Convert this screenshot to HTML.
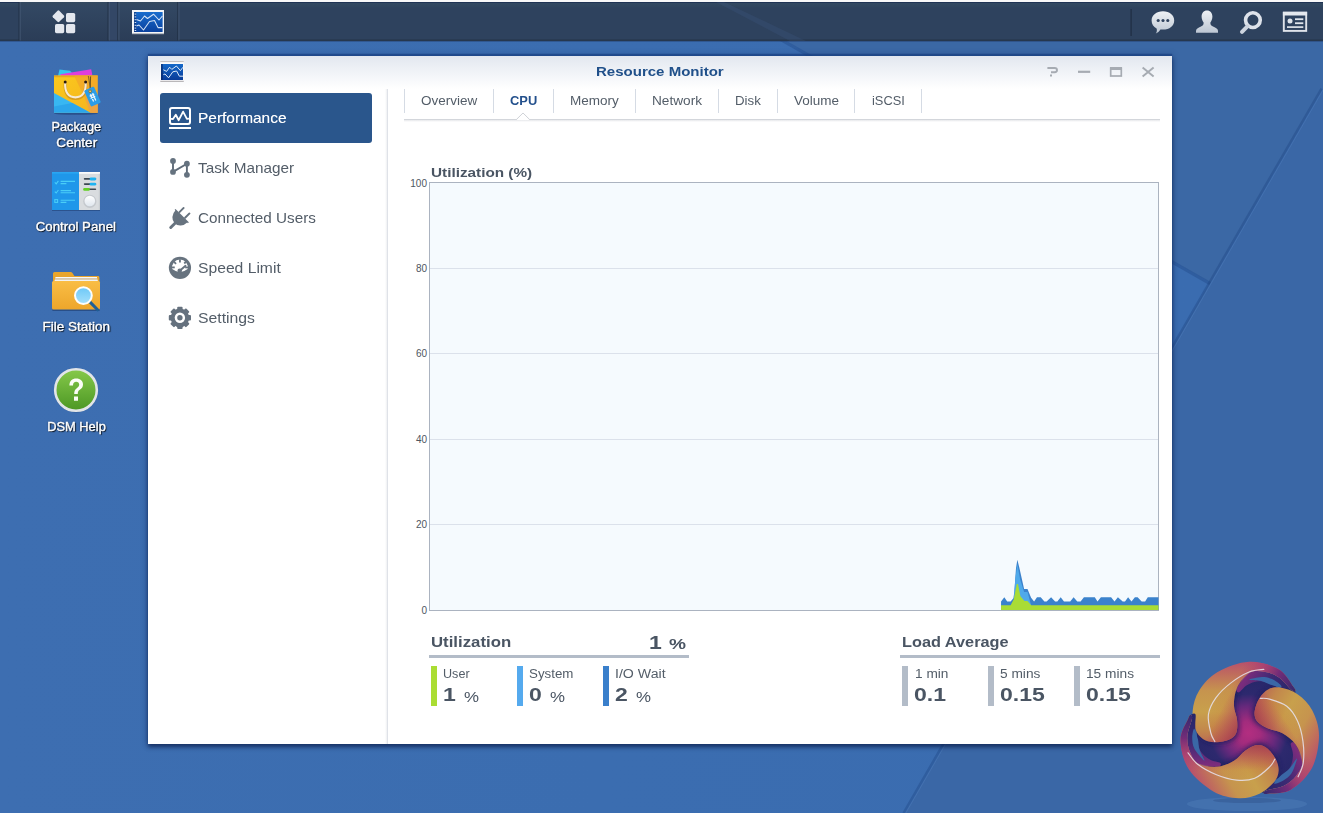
<!DOCTYPE html>
<html><head><meta charset="utf-8"><title>Resource Monitor</title><style>
html,body{margin:0;padding:0;}
body{width:1323px;height:813px;overflow:hidden;position:relative;background:#3b6cb0;font-family:"Liberation Sans",sans-serif;}
.t{position:absolute;white-space:nowrap;line-height:20px;height:20px;display:block;}
.abs{position:absolute;}
svg{position:absolute;overflow:visible;}
.dl{text-shadow:1px 1px 1px rgba(0,0,0,.85),0 0 2px rgba(0,0,0,.45);-webkit-text-stroke:.35px #fff;}
</style></head><body>
<svg style="left:0;top:0" width="1323" height="813" viewBox="0 0 1323 813">
<defs>
<linearGradient id="wg2" gradientUnits="userSpaceOnUse" x1="0" y1="0" x2="1200" y2="0"><stop offset="0" stop-color="#3d6eb1"/><stop offset="0.5" stop-color="#3b6db0"/><stop offset="1" stop-color="#3a6cb0"/></linearGradient>
</defs>
<rect width="1323" height="813" fill="#3b6cb0"/>
<polygon points="0,0 714,0 1210,282 905,813 0,813" fill="url(#wg2)"/>
<polygon points="714,0 1323,0 1323,88.7 1210,282" fill="#3b68a5"/>
<polygon points="1323,88.7 1323,813 905,813 1210,282" fill="#3a67a6"/>
<path d="M714 1.5 L1210 283.5" stroke="rgba(24,58,120,.30)" stroke-width="3.2" fill="none"/>
<path d="M1323 88.7 L1210 284 L905 813" stroke="rgba(24,58,120,.30)" stroke-width="2.4" fill="none" transform="translate(-1.5,0)"/>
<path d="M1323 88.7 L1210 284 L905 813" stroke="rgba(120,170,230,.16)" stroke-width="1" fill="none" transform="translate(0.8,0)"/>
<ellipse cx="1247" cy="804" rx="60" ry="7" fill="rgba(130,175,230,.14)"/><ellipse cx="1247" cy="800.5" rx="34" ry="2.6" fill="rgba(20,40,90,.18)"/>
</svg>

<svg style="left:1179.7px;top:662.5px" width="140" height="140" viewBox="-101 -101 202 202">
<defs>
<radialGradient id="lgc" gradientUnits="userSpaceOnUse" cx="-2" cy="0" r="78">
<stop offset="0" stop-color="#b32e80"/><stop offset="0.22" stop-color="#a22c7d"/><stop offset="0.5" stop-color="#66297c"/><stop offset="0.72" stop-color="#2d296e"/><stop offset="1" stop-color="#28276a"/>
</radialGradient>
<linearGradient id="lgl" gradientUnits="userSpaceOnUse" x1="0" y1="-103" x2="0" y2="14">
<stop offset="0" stop-color="#b8506c"/><stop offset="0.14" stop-color="#bf6a5e"/><stop offset="0.36" stop-color="#c6944e"/><stop offset="0.62" stop-color="#c8a04c"/><stop offset="0.85" stop-color="#c2874c"/><stop offset="1" stop-color="#bb6c52"/>
</linearGradient>
<linearGradient id="lgt" gradientUnits="userSpaceOnUse" x1="-8" y1="-100" x2="66" y2="-62">
<stop offset="0" stop-color="#b04070" stop-opacity="0"/><stop offset="0.3" stop-color="#a83a74" stop-opacity=".7"/><stop offset="0.6" stop-color="#742c78" stop-opacity="1"/><stop offset="1" stop-color="#34296e" stop-opacity="1"/>
</linearGradient>
<linearGradient id="lgi" gradientUnits="userSpaceOnUse" x1="-62" y1="-45" x2="-16" y2="-8">
<stop offset="0" stop-color="#d09c48" stop-opacity="0"/><stop offset="0.55" stop-color="#c8783e" stop-opacity=".35"/><stop offset="1" stop-color="#b04a40" stop-opacity=".65"/>
</linearGradient>
<linearGradient id="lgr" gradientUnits="userSpaceOnUse" x1="0" y1="-90" x2="60" y2="-55">
<stop offset="0" stop-color="#7a2c7c"/><stop offset="0.45" stop-color="#3e2a74"/><stop offset="1" stop-color="#25266a"/>
</linearGradient>
</defs>
<circle cx="0" cy="0" r="77" fill="url(#lgc)"/>
<defs><filter id="lbl" x="-20%" y="-20%" width="140%" height="140%"><feGaussianBlur stdDeviation="3"/></filter><clipPath id="lcp"><circle cx="0" cy="0" r="77"/></clipPath></defs>
<g clip-path="url(#lcp)">
<g transform="rotate(0)"><path d="M-50.7 13.3 C-56.9 13.1 -63.3 11.6 -68.0 8.5 C-72.7 5.4 -76.2 1.4 -78.7 -5.3 C-81.1 -12.1 -83.6 -22.7 -82.7 -32.0 C-81.8 -41.3 -79.3 -52.0 -73.3 -61.3 C-67.3 -70.7 -58.7 -81.1 -46.7 -88.0 C-34.7 -94.9 -16.0 -102.0 -1.3 -102.7 C13.3 -103.3 30.7 -98.0 41.3 -92.0 C52.0 -86.0 58.7 -71.9 62.7 -66.7 C66.7 -61.5 65.9 -61.5 65.3 -60.8 C64.8 -60.1 63.5 -59.1 59.5 -62.4 C55.5 -65.7 47.9 -76.2 41.3 -80.5 C34.8 -84.9 27.1 -87.6 20.0 -88.5 C12.9 -89.5 5.1 -90.3 -1.3 -86.4 C-7.8 -82.5 -15.0 -73.1 -18.7 -65.3 C-22.3 -57.6 -23.2 -47.8 -23.2 -40.0 C-23.2 -32.2 -19.2 -25.3 -18.7 -18.7 C-18.1 -12.0 -18.0 -4.8 -20.0 0.0 C-22.0 4.8 -25.6 7.6 -30.7 9.9 C-35.8 12.1 -44.4 13.6 -50.7 13.3Z" fill="#1f1f5c" opacity=".7" filter="url(#lbl)" transform="translate(3,3)"/></g>
<g transform="rotate(120)"><path d="M-50.7 13.3 C-56.9 13.1 -63.3 11.6 -68.0 8.5 C-72.7 5.4 -76.2 1.4 -78.7 -5.3 C-81.1 -12.1 -83.6 -22.7 -82.7 -32.0 C-81.8 -41.3 -79.3 -52.0 -73.3 -61.3 C-67.3 -70.7 -58.7 -81.1 -46.7 -88.0 C-34.7 -94.9 -16.0 -102.0 -1.3 -102.7 C13.3 -103.3 30.7 -98.0 41.3 -92.0 C52.0 -86.0 58.7 -71.9 62.7 -66.7 C66.7 -61.5 65.9 -61.5 65.3 -60.8 C64.8 -60.1 63.5 -59.1 59.5 -62.4 C55.5 -65.7 47.9 -76.2 41.3 -80.5 C34.8 -84.9 27.1 -87.6 20.0 -88.5 C12.9 -89.5 5.1 -90.3 -1.3 -86.4 C-7.8 -82.5 -15.0 -73.1 -18.7 -65.3 C-22.3 -57.6 -23.2 -47.8 -23.2 -40.0 C-23.2 -32.2 -19.2 -25.3 -18.7 -18.7 C-18.1 -12.0 -18.0 -4.8 -20.0 0.0 C-22.0 4.8 -25.6 7.6 -30.7 9.9 C-35.8 12.1 -44.4 13.6 -50.7 13.3Z" fill="#1f1f5c" opacity=".7" filter="url(#lbl)" transform="translate(3,3)"/></g>
<g transform="rotate(240)"><path d="M-50.7 13.3 C-56.9 13.1 -63.3 11.6 -68.0 8.5 C-72.7 5.4 -76.2 1.4 -78.7 -5.3 C-81.1 -12.1 -83.6 -22.7 -82.7 -32.0 C-81.8 -41.3 -79.3 -52.0 -73.3 -61.3 C-67.3 -70.7 -58.7 -81.1 -46.7 -88.0 C-34.7 -94.9 -16.0 -102.0 -1.3 -102.7 C13.3 -103.3 30.7 -98.0 41.3 -92.0 C52.0 -86.0 58.7 -71.9 62.7 -66.7 C66.7 -61.5 65.9 -61.5 65.3 -60.8 C64.8 -60.1 63.5 -59.1 59.5 -62.4 C55.5 -65.7 47.9 -76.2 41.3 -80.5 C34.8 -84.9 27.1 -87.6 20.0 -88.5 C12.9 -89.5 5.1 -90.3 -1.3 -86.4 C-7.8 -82.5 -15.0 -73.1 -18.7 -65.3 C-22.3 -57.6 -23.2 -47.8 -23.2 -40.0 C-23.2 -32.2 -19.2 -25.3 -18.7 -18.7 C-18.1 -12.0 -18.0 -4.8 -20.0 0.0 C-22.0 4.8 -25.6 7.6 -30.7 9.9 C-35.8 12.1 -44.4 13.6 -50.7 13.3Z" fill="#1f1f5c" opacity=".7" filter="url(#lbl)" transform="translate(3,3)"/></g>
</g>
<g transform="rotate(0)"><path d="M-1.3 -86.4 C5.1 -90.3 12.9 -89.5 20.0 -88.5 C27.1 -87.6 34.8 -84.9 41.3 -80.5 C47.9 -76.2 55.5 -65.7 59.5 -62.4 C63.5 -59.1 64.8 -62.1 65.3 -60.8 C65.9 -59.5 65.3 -54.4 62.7 -54.7 C60.0 -55.0 54.7 -59.8 49.3 -62.7 C44.0 -65.6 36.9 -70.0 30.7 -72.0 C24.4 -74.0 17.8 -75.1 12.0 -74.7 C6.2 -74.2 0.7 -72.0 -4.0 -69.3 C-8.7 -66.7 -13.6 -59.3 -16.0 -58.7 C-18.4 -58.0 -21.1 -60.7 -18.7 -65.3 C-16.2 -70.0 -7.8 -82.5 -1.3 -86.4Z" fill="url(#lgr)"/>
<path d="M-50.7 13.3 C-56.9 13.1 -63.3 11.6 -68.0 8.5 C-72.7 5.4 -76.2 1.4 -78.7 -5.3 C-81.1 -12.1 -83.6 -22.7 -82.7 -32.0 C-81.8 -41.3 -79.3 -52.0 -73.3 -61.3 C-67.3 -70.7 -58.7 -81.1 -46.7 -88.0 C-34.7 -94.9 -16.0 -102.0 -1.3 -102.7 C13.3 -103.3 30.7 -98.0 41.3 -92.0 C52.0 -86.0 58.7 -71.9 62.7 -66.7 C66.7 -61.5 65.9 -61.5 65.3 -60.8 C64.8 -60.1 63.5 -59.1 59.5 -62.4 C55.5 -65.7 47.9 -76.2 41.3 -80.5 C34.8 -84.9 27.1 -87.6 20.0 -88.5 C12.9 -89.5 5.1 -90.3 -1.3 -86.4 C-7.8 -82.5 -15.0 -73.1 -18.7 -65.3 C-22.3 -57.6 -23.2 -47.8 -23.2 -40.0 C-23.2 -32.2 -19.2 -25.3 -18.7 -18.7 C-18.1 -12.0 -18.0 -4.8 -20.0 0.0 C-22.0 4.8 -25.6 7.6 -30.7 9.9 C-35.8 12.1 -44.4 13.6 -50.7 13.3Z" fill="url(#lgl)"/>
<path d="M-50.7 13.3 C-56.9 13.1 -63.3 11.6 -68.0 8.5 C-72.7 5.4 -76.2 1.4 -78.7 -5.3 C-81.1 -12.1 -83.6 -22.7 -82.7 -32.0 C-81.8 -41.3 -79.3 -52.0 -73.3 -61.3 C-67.3 -70.7 -58.7 -81.1 -46.7 -88.0 C-34.7 -94.9 -16.0 -102.0 -1.3 -102.7 C13.3 -103.3 30.7 -98.0 41.3 -92.0 C52.0 -86.0 58.7 -71.9 62.7 -66.7 C66.7 -61.5 65.9 -61.5 65.3 -60.8 C64.8 -60.1 63.5 -59.1 59.5 -62.4 C55.5 -65.7 47.9 -76.2 41.3 -80.5 C34.8 -84.9 27.1 -87.6 20.0 -88.5 C12.9 -89.5 5.1 -90.3 -1.3 -86.4 C-7.8 -82.5 -15.0 -73.1 -18.7 -65.3 C-22.3 -57.6 -23.2 -47.8 -23.2 -40.0 C-23.2 -32.2 -19.2 -25.3 -18.7 -18.7 C-18.1 -12.0 -18.0 -4.8 -20.0 0.0 C-22.0 4.8 -25.6 7.6 -30.7 9.9 C-35.8 12.1 -44.4 13.6 -50.7 13.3Z" fill="url(#lgt)"/>
<path d="M-1.3 -87.2 C-2.9 -88.3 -20.0 -78.1 -28.0 -72.0 C-36.0 -65.9 -44.0 -58.2 -49.3 -50.7 C-54.7 -43.1 -58.8 -35.1 -60.0 -26.7 C-61.2 -18.2 -58.1 -6.6 -56.5 0.0 C-55.0 6.6 -55.0 11.2 -50.7 12.8 C-46.4 14.4 -35.8 12.0 -30.7 9.9 C-25.6 7.7 -22.0 4.8 -20.0 0.0 C-18.0 -4.8 -18.1 -12.0 -18.7 -18.7 C-19.2 -25.3 -23.2 -32.2 -23.2 -40.0 C-23.2 -47.8 -22.3 -57.5 -18.7 -65.3 C-15.0 -73.2 0.2 -86.1 -1.3 -87.2Z" fill="url(#lgi)"/>
<path d="M20.0 -91.7 C16.4 -91.1 6.7 -91.3 -1.3 -88.0 C-9.3 -84.7 -20.0 -78.2 -28.0 -72.0 C-36.0 -65.8 -44.0 -58.2 -49.3 -50.7 C-54.7 -43.1 -58.8 -35.1 -60.0 -26.7 C-61.2 -18.2 -58.1 -6.5 -56.5 0.0 C-55.0 6.5 -51.6 10.2 -50.7 12.3" fill="none" stroke="#e6e0ea" stroke-width="1.7" stroke-linecap="round" opacity=".88"/></g>
<g transform="rotate(120)"><path d="M-1.3 -86.4 C5.1 -90.3 12.9 -89.5 20.0 -88.5 C27.1 -87.6 34.8 -84.9 41.3 -80.5 C47.9 -76.2 55.5 -65.7 59.5 -62.4 C63.5 -59.1 64.8 -62.1 65.3 -60.8 C65.9 -59.5 65.3 -54.4 62.7 -54.7 C60.0 -55.0 54.7 -59.8 49.3 -62.7 C44.0 -65.6 36.9 -70.0 30.7 -72.0 C24.4 -74.0 17.8 -75.1 12.0 -74.7 C6.2 -74.2 0.7 -72.0 -4.0 -69.3 C-8.7 -66.7 -13.6 -59.3 -16.0 -58.7 C-18.4 -58.0 -21.1 -60.7 -18.7 -65.3 C-16.2 -70.0 -7.8 -82.5 -1.3 -86.4Z" fill="url(#lgr)"/>
<path d="M-50.7 13.3 C-56.9 13.1 -63.3 11.6 -68.0 8.5 C-72.7 5.4 -76.2 1.4 -78.7 -5.3 C-81.1 -12.1 -83.6 -22.7 -82.7 -32.0 C-81.8 -41.3 -79.3 -52.0 -73.3 -61.3 C-67.3 -70.7 -58.7 -81.1 -46.7 -88.0 C-34.7 -94.9 -16.0 -102.0 -1.3 -102.7 C13.3 -103.3 30.7 -98.0 41.3 -92.0 C52.0 -86.0 58.7 -71.9 62.7 -66.7 C66.7 -61.5 65.9 -61.5 65.3 -60.8 C64.8 -60.1 63.5 -59.1 59.5 -62.4 C55.5 -65.7 47.9 -76.2 41.3 -80.5 C34.8 -84.9 27.1 -87.6 20.0 -88.5 C12.9 -89.5 5.1 -90.3 -1.3 -86.4 C-7.8 -82.5 -15.0 -73.1 -18.7 -65.3 C-22.3 -57.6 -23.2 -47.8 -23.2 -40.0 C-23.2 -32.2 -19.2 -25.3 -18.7 -18.7 C-18.1 -12.0 -18.0 -4.8 -20.0 0.0 C-22.0 4.8 -25.6 7.6 -30.7 9.9 C-35.8 12.1 -44.4 13.6 -50.7 13.3Z" fill="url(#lgl)"/>
<path d="M-50.7 13.3 C-56.9 13.1 -63.3 11.6 -68.0 8.5 C-72.7 5.4 -76.2 1.4 -78.7 -5.3 C-81.1 -12.1 -83.6 -22.7 -82.7 -32.0 C-81.8 -41.3 -79.3 -52.0 -73.3 -61.3 C-67.3 -70.7 -58.7 -81.1 -46.7 -88.0 C-34.7 -94.9 -16.0 -102.0 -1.3 -102.7 C13.3 -103.3 30.7 -98.0 41.3 -92.0 C52.0 -86.0 58.7 -71.9 62.7 -66.7 C66.7 -61.5 65.9 -61.5 65.3 -60.8 C64.8 -60.1 63.5 -59.1 59.5 -62.4 C55.5 -65.7 47.9 -76.2 41.3 -80.5 C34.8 -84.9 27.1 -87.6 20.0 -88.5 C12.9 -89.5 5.1 -90.3 -1.3 -86.4 C-7.8 -82.5 -15.0 -73.1 -18.7 -65.3 C-22.3 -57.6 -23.2 -47.8 -23.2 -40.0 C-23.2 -32.2 -19.2 -25.3 -18.7 -18.7 C-18.1 -12.0 -18.0 -4.8 -20.0 0.0 C-22.0 4.8 -25.6 7.6 -30.7 9.9 C-35.8 12.1 -44.4 13.6 -50.7 13.3Z" fill="url(#lgt)"/>
<path d="M-1.3 -87.2 C-2.9 -88.3 -20.0 -78.1 -28.0 -72.0 C-36.0 -65.9 -44.0 -58.2 -49.3 -50.7 C-54.7 -43.1 -58.8 -35.1 -60.0 -26.7 C-61.2 -18.2 -58.1 -6.6 -56.5 0.0 C-55.0 6.6 -55.0 11.2 -50.7 12.8 C-46.4 14.4 -35.8 12.0 -30.7 9.9 C-25.6 7.7 -22.0 4.8 -20.0 0.0 C-18.0 -4.8 -18.1 -12.0 -18.7 -18.7 C-19.2 -25.3 -23.2 -32.2 -23.2 -40.0 C-23.2 -47.8 -22.3 -57.5 -18.7 -65.3 C-15.0 -73.2 0.2 -86.1 -1.3 -87.2Z" fill="url(#lgi)"/>
<path d="M20.0 -91.7 C16.4 -91.1 6.7 -91.3 -1.3 -88.0 C-9.3 -84.7 -20.0 -78.2 -28.0 -72.0 C-36.0 -65.8 -44.0 -58.2 -49.3 -50.7 C-54.7 -43.1 -58.8 -35.1 -60.0 -26.7 C-61.2 -18.2 -58.1 -6.5 -56.5 0.0 C-55.0 6.5 -51.6 10.2 -50.7 12.3" fill="none" stroke="#e6e0ea" stroke-width="1.7" stroke-linecap="round" opacity=".88"/></g>
<g transform="rotate(240)"><path d="M-1.3 -86.4 C5.1 -90.3 12.9 -89.5 20.0 -88.5 C27.1 -87.6 34.8 -84.9 41.3 -80.5 C47.9 -76.2 55.5 -65.7 59.5 -62.4 C63.5 -59.1 64.8 -62.1 65.3 -60.8 C65.9 -59.5 65.3 -54.4 62.7 -54.7 C60.0 -55.0 54.7 -59.8 49.3 -62.7 C44.0 -65.6 36.9 -70.0 30.7 -72.0 C24.4 -74.0 17.8 -75.1 12.0 -74.7 C6.2 -74.2 0.7 -72.0 -4.0 -69.3 C-8.7 -66.7 -13.6 -59.3 -16.0 -58.7 C-18.4 -58.0 -21.1 -60.7 -18.7 -65.3 C-16.2 -70.0 -7.8 -82.5 -1.3 -86.4Z" fill="url(#lgr)"/>
<path d="M-50.7 13.3 C-56.9 13.1 -63.3 11.6 -68.0 8.5 C-72.7 5.4 -76.2 1.4 -78.7 -5.3 C-81.1 -12.1 -83.6 -22.7 -82.7 -32.0 C-81.8 -41.3 -79.3 -52.0 -73.3 -61.3 C-67.3 -70.7 -58.7 -81.1 -46.7 -88.0 C-34.7 -94.9 -16.0 -102.0 -1.3 -102.7 C13.3 -103.3 30.7 -98.0 41.3 -92.0 C52.0 -86.0 58.7 -71.9 62.7 -66.7 C66.7 -61.5 65.9 -61.5 65.3 -60.8 C64.8 -60.1 63.5 -59.1 59.5 -62.4 C55.5 -65.7 47.9 -76.2 41.3 -80.5 C34.8 -84.9 27.1 -87.6 20.0 -88.5 C12.9 -89.5 5.1 -90.3 -1.3 -86.4 C-7.8 -82.5 -15.0 -73.1 -18.7 -65.3 C-22.3 -57.6 -23.2 -47.8 -23.2 -40.0 C-23.2 -32.2 -19.2 -25.3 -18.7 -18.7 C-18.1 -12.0 -18.0 -4.8 -20.0 0.0 C-22.0 4.8 -25.6 7.6 -30.7 9.9 C-35.8 12.1 -44.4 13.6 -50.7 13.3Z" fill="url(#lgl)"/>
<path d="M-50.7 13.3 C-56.9 13.1 -63.3 11.6 -68.0 8.5 C-72.7 5.4 -76.2 1.4 -78.7 -5.3 C-81.1 -12.1 -83.6 -22.7 -82.7 -32.0 C-81.8 -41.3 -79.3 -52.0 -73.3 -61.3 C-67.3 -70.7 -58.7 -81.1 -46.7 -88.0 C-34.7 -94.9 -16.0 -102.0 -1.3 -102.7 C13.3 -103.3 30.7 -98.0 41.3 -92.0 C52.0 -86.0 58.7 -71.9 62.7 -66.7 C66.7 -61.5 65.9 -61.5 65.3 -60.8 C64.8 -60.1 63.5 -59.1 59.5 -62.4 C55.5 -65.7 47.9 -76.2 41.3 -80.5 C34.8 -84.9 27.1 -87.6 20.0 -88.5 C12.9 -89.5 5.1 -90.3 -1.3 -86.4 C-7.8 -82.5 -15.0 -73.1 -18.7 -65.3 C-22.3 -57.6 -23.2 -47.8 -23.2 -40.0 C-23.2 -32.2 -19.2 -25.3 -18.7 -18.7 C-18.1 -12.0 -18.0 -4.8 -20.0 0.0 C-22.0 4.8 -25.6 7.6 -30.7 9.9 C-35.8 12.1 -44.4 13.6 -50.7 13.3Z" fill="url(#lgt)"/>
<path d="M-1.3 -87.2 C-2.9 -88.3 -20.0 -78.1 -28.0 -72.0 C-36.0 -65.9 -44.0 -58.2 -49.3 -50.7 C-54.7 -43.1 -58.8 -35.1 -60.0 -26.7 C-61.2 -18.2 -58.1 -6.6 -56.5 0.0 C-55.0 6.6 -55.0 11.2 -50.7 12.8 C-46.4 14.4 -35.8 12.0 -30.7 9.9 C-25.6 7.7 -22.0 4.8 -20.0 0.0 C-18.0 -4.8 -18.1 -12.0 -18.7 -18.7 C-19.2 -25.3 -23.2 -32.2 -23.2 -40.0 C-23.2 -47.8 -22.3 -57.5 -18.7 -65.3 C-15.0 -73.2 0.2 -86.1 -1.3 -87.2Z" fill="url(#lgi)"/>
<path d="M20.0 -91.7 C16.4 -91.1 6.7 -91.3 -1.3 -88.0 C-9.3 -84.7 -20.0 -78.2 -28.0 -72.0 C-36.0 -65.8 -44.0 -58.2 -49.3 -50.7 C-54.7 -43.1 -58.8 -35.1 -60.0 -26.7 C-61.2 -18.2 -58.1 -6.5 -56.5 0.0 C-55.0 6.5 -51.6 10.2 -50.7 12.3" fill="none" stroke="#e6e0ea" stroke-width="1.7" stroke-linecap="round" opacity=".88"/></g>
<path d="M0.3 -77.9 C3.7 -78.7 14.8 -81.3 20.7 -80.9 C26.6 -80.5 31.6 -78.0 35.8 -75.6 C39.9 -73.2 46.6 -67.6 45.6 -66.6 C44.6 -65.6 34.7 -68.2 29.8 -69.6 C24.9 -71.0 21.1 -73.8 16.2 -74.9 C11.3 -76.0 2.9 -75.9 0.3 -76.4 C-2.4 -76.9 -3.1 -77.2 0.3 -77.9Z" fill="#3a67a6" transform="rotate(0)"/>
<path d="M0.3 -77.9 C3.7 -78.7 14.8 -81.3 20.7 -80.9 C26.6 -80.5 31.6 -78.0 35.8 -75.6 C39.9 -73.2 46.6 -67.6 45.6 -66.6 C44.6 -65.6 34.7 -68.2 29.8 -69.6 C24.9 -71.0 21.1 -73.8 16.2 -74.9 C11.3 -76.0 2.9 -75.9 0.3 -76.4 C-2.4 -76.9 -3.1 -77.2 0.3 -77.9Z" fill="#3a67a6" transform="rotate(120)"/>
<path d="M0.3 -77.9 C3.7 -78.7 14.8 -81.3 20.7 -80.9 C26.6 -80.5 31.6 -78.0 35.8 -75.6 C39.9 -73.2 46.6 -67.6 45.6 -66.6 C44.6 -65.6 34.7 -68.2 29.8 -69.6 C24.9 -71.0 21.1 -73.8 16.2 -74.9 C11.3 -76.0 2.9 -75.9 0.3 -76.4 C-2.4 -76.9 -3.1 -77.2 0.3 -77.9Z" fill="#3a67a6" transform="rotate(240)"/>
</svg>
<div class="abs" style="left:0;top:0;width:1323px;height:2px;background:#f8f8f8;"></div>
<div class="abs" style="left:0;top:2px;width:1323px;height:38.5px;background:linear-gradient(#1f3354 0,#1f3354 0.7px,#324861 1.4px,#30465f 4px,#2e425e 6px,#2e425e 36.5px,#26374e 38px);"></div>
<svg style="left:0;top:2px" width="1323" height="39" viewBox="0 2 1323 39">
<defs>
<linearGradient id="tb1" x1="0" y1="0" x2="0" y2="1"><stop offset="0" stop-color="#34495f"/><stop offset="0.15" stop-color="#324762"/><stop offset="1" stop-color="#2b3d57"/></linearGradient>
<linearGradient id="ic" x1="0" y1="0" x2="0" y2="1"><stop offset="0" stop-color="#eef1f5"/><stop offset="1" stop-color="#bcc6d3"/></linearGradient>
</defs>
<path d="M716 2 L790 41 L806 41 L724 2Z" fill="rgba(70,100,150,.18)"/>
<rect x="20" y="2" width="88" height="38.5" fill="url(#tb1)"/>
<rect x="109" y="2" width="9" height="38.5" fill="#36496a" opacity=".75"/>
<rect x="119" y="2" width="59" height="38.5" fill="url(#tb1)"/>
<g fill="#1f2d42"><rect x="18.6" y="2" width="1" height="38.5"/><rect x="107.6" y="2" width="1" height="38.5"/><rect x="117.4" y="2" width="1" height="38.5"/><rect x="177.4" y="2" width="1" height="38.5"/></g>
<g fill="#4a5d79" opacity=".8"><rect x="19.6" y="2" width="1" height="38.5"/><rect x="108.6" y="2" width="1" height="38.5"/><rect x="118.4" y="2" width="1" height="38.5"/><rect x="178.4" y="2" width="1" height="38.5"/></g>
<!-- main menu icon -->
<g fill="#e3e7ee">
<rect x="-4.5" y="-4.5" width="9" height="9" rx="1.2" transform="translate(58.4,16.3) rotate(45)"/>
<rect x="66" y="13" width="9.2" height="9.2" rx="1.6"/>
<rect x="55" y="24" width="9.2" height="9.2" rx="1.6"/>
<rect x="66" y="24" width="9.2" height="9.2" rx="1.6"/>
</g>
<!-- app icon -->
<g id="rmicon">
<rect x="132" y="10" width="32" height="24" fill="#f4f6f8"/>
<rect x="132" y="33" width="32" height="1.2" fill="#b9bec6"/>
<rect x="134" y="12" width="28.4" height="20" fill="#0b55b3"/>
<rect x="134" y="12" width="28.4" height="20" fill="url(#rmg)"/>
<rect x="134" y="12" width="2.2" height="20" fill="#0a2a6a" opacity=".55"/>
<path d="M136.5 19.5 L140.5 21 L144.5 16 L147.5 18.5 L153.5 14.2 L159 20 L162.4 16" stroke="#d6e4f6" stroke-width="1.05" fill="none" stroke-linejoin="round"/>
<path d="M136.5 26 L139 25 L143.5 30 L149.5 21.5 L154.5 20.5 L158 27.6 L162.4 27.6" stroke="#d6e4f6" stroke-width="1.05" fill="none" stroke-linejoin="round"/>
<g fill="#cfe0f5"><rect x="134.6" y="13.6" width="1.6" height="1"/><rect x="134.6" y="16.4" width="1.6" height="1"/><rect x="134.6" y="19.2" width="1.6" height="1"/><rect x="134.6" y="22" width="1.6" height="1"/><rect x="134.6" y="24.8" width="1.6" height="1"/><rect x="134.6" y="27.6" width="1.6" height="1"/><rect x="134.6" y="30" width="1.6" height="1"/></g>
</g>
<defs><linearGradient id="rmg" x1="0" y1="0" x2="0" y2="1"><stop offset="0" stop-color="#1a6fd0" stop-opacity=".9"/><stop offset="1" stop-color="#0a3f9c" stop-opacity=".9"/></linearGradient></defs>
<!-- right separator -->
<rect x="1130.6" y="9" width="1" height="27" fill="#1d2a3e"/><rect x="1131.6" y="9" width="1" height="27" fill="#44577310"/>
<!-- chat -->
<g fill="url(#ic)" transform="translate(0,0.6)">
<path d="M1163 10.6 C1169.6 10.6 1174.2 14.6 1174.2 19.8 C1174.2 25 1169.6 29 1163 29 C1162 29 1161.2 28.9 1160.4 28.8 C1159.4 30.6 1157.6 32.2 1155.8 32.8 C1156.8 31.4 1157.2 29.6 1156.6 27.8 C1153.4 26.2 1151.6 23.2 1151.6 19.8 C1151.6 14.6 1156.4 10.6 1163 10.6Z"/>
</g>
<g fill="#2e415d"><circle cx="1158.2" cy="20.5" r="1.55"/><circle cx="1163" cy="20.5" r="1.55"/><circle cx="1167.8" cy="20.5" r="1.55"/></g>
<!-- user -->
<path fill="url(#ic)" d="M1207 10.4 C1210.4 10.4 1212.4 13 1212.4 16.6 C1212.4 19 1211.6 21 1210.4 22.4 C1210.2 24.4 1211 25.6 1213 26.4 C1216 27.6 1218 28.8 1218 31 L1218 32.8 L1196 32.8 L1196 31 C1196 28.8 1198 27.6 1201 26.4 C1203 25.6 1203.8 24.4 1203.6 22.4 C1202.4 21 1201.6 19 1201.6 16.6 C1201.6 13 1203.6 10.4 1207 10.4Z"/>
<!-- search -->
<g fill="none"><circle cx="1252.9" cy="20.1" r="7.35" stroke-width="3.6" stroke="#dde2ea"/><path d="M1247.4 26.4 L1242 31.8" stroke-width="4" stroke-linecap="round" stroke="#cdd4df"/></g>
<!-- widget -->
<g>
<rect x="1283.8" y="12.7" width="22.4" height="18.2" fill="none" stroke="#dfe3ea" stroke-width="1.9"/>
<rect x="1282.9" y="11.8" width="24.2" height="3.7" fill="#e4e8ee"/>
<circle cx="1290" cy="21" r="2.5" fill="#dfe4eb"/>
<rect x="1295" y="18.3" width="8.3" height="1.8" fill="#dfe4eb"/><rect x="1295" y="22.3" width="8.3" height="1.8" fill="#dfe4eb"/>
<rect x="1287" y="26.2" width="16.3" height="1.8" fill="#d3d9e2"/>
</g>
</svg>
<div class="abs" style="left:0;top:40.5px;width:1323px;height:1px;background:rgba(30,50,90,.35);"></div>

<svg style="left:0;top:0" width="150" height="460" viewBox="0 0 150 460">
<defs>
<linearGradient id="pk1" x1="0" y1="0" x2="1" y2="1"><stop offset="0" stop-color="#fbc91c"/><stop offset="1" stop-color="#f4b321"/></linearGradient>
<linearGradient id="fs1" x1="0" y1="0" x2="0" y2="1"><stop offset="0" stop-color="#f9bd45"/><stop offset="1" stop-color="#eda62b"/></linearGradient>
<linearGradient id="hp1" x1="0" y1="0" x2="0" y2="1"><stop offset="0" stop-color="#86c94a"/><stop offset="1" stop-color="#4c9724"/></linearGradient>
<linearGradient id="mg1" x1="0" y1="0" x2="0" y2="1"><stop offset="0" stop-color="#6cc8f7"/><stop offset="1" stop-color="#a6e0fb"/></linearGradient>
<linearGradient id="kn1" x1="0" y1="0" x2="0" y2="1"><stop offset="0" stop-color="#ffffff"/><stop offset="1" stop-color="#dfe6ee"/></linearGradient>
</defs>
<!-- Package Center -->
<g>
<ellipse cx="76" cy="113.4" rx="22" ry="1.4" fill="rgba(10,30,70,.35)"/>
<path d="M58 76 L59.5 69.4 L70 70.8 L75 76Z" fill="#36c4ee"/>
<path d="M60.4 74.2 L91.2 69.2 L92.4 75.4 L61 77.4Z" fill="#e03ddb"/>
<rect x="54" y="75.6" width="43.6" height="37.2" fill="url(#pk1)"/>
<path d="M54 75.6 L97.6 75.6 L97.6 77.2 L54 77.2Z" fill="#e9a91c"/>
<path d="M74 75.6 L97.6 75.6 L97.6 112.8 L92 112.8 Z" fill="#f3a62a" opacity=".75"/>
<path d="M85 98 L97.6 104 L97.6 112.8 L90 112.8Z" fill="#eba24a" opacity=".8"/>
<path d="M54 93 L90.4 112.8 L54 112.8Z" fill="#38b7f2"/>
<path d="M54 106.6 L72.4 103 L90.4 112.8 L54 112.8Z" fill="#2aa3ea" opacity=".85"/>
<path d="M65.2 82.4 C64.6 92.6 68.6 97.4 75.4 97.4 C82.2 97.4 86.2 92.6 85.6 82.4" fill="none" stroke="#b98222" stroke-width="3.2" opacity=".55" transform="translate(0,1)"/>
<path d="M65.2 82.4 C64.6 92.6 68.6 97.4 75.4 97.4 C82.2 97.4 86.2 92.6 85.6 82.4" fill="none" stroke="#f6ead6" stroke-width="2.1"/>
<circle cx="65.2" cy="82" r="1.5" fill="#2a1a10"/><circle cx="85.6" cy="82" r="1.5" fill="#2a1a10"/>
<path d="M88.4 76 L90.6 90" stroke="#8a6a2a" stroke-width="1.2" fill="none"/><path d="M90.6 76.4 L90.2 90" stroke="#6d5320" stroke-width="1" fill="none"/>
<g transform="translate(92.4,96.4) rotate(-24)"><rect x="-5.4" y="-8.6" width="10.8" height="17.6" rx="1.2" fill="#2b9de8"/><circle cx="0" cy="-5.6" r="1.7" fill="#9a7a2c"/><circle cx="0" cy="-5.6" r="0.8" fill="#e8d9a0"/><path d="M-2.4 -1.4 L2.6 -1.4 M-2.4 1 L2.6 1 M-1 -2.8 L-1 5.2 M1.4 -2.8 L1.4 5.2" stroke="#eaf5fd" stroke-width="1.3"/></g>
</g>
<!-- Control Panel -->
<g>
<rect x="52" y="209.2" width="48" height="1.6" fill="rgba(10,30,70,.4)"/>
<rect x="52" y="172" width="30.4" height="38" fill="#1f97ea"/>
<rect x="52" y="172" width="30.4" height="1.6" fill="#2aa6f2"/>
<rect x="79" y="172" width="21" height="38" fill="#d9dcdf"/>
<rect x="79" y="172" width="21" height="1.8" fill="#fbfbfb"/>
<rect x="98.8" y="173.8" width="1.2" height="36.2" fill="#c9cdd1"/>
<g stroke="#49cdf7" stroke-width="1.1" fill="none">
<path d="M54.8 182.4 L56.2 183.8 L58.4 180.8"/><path d="M54.8 191.6 L56.2 193 L58.4 190"/><rect x="54.8" y="199.6" width="2.8" height="2.8"/>
<path d="M60.6 181.4 L75 181.4 M60.6 183.6 L66.4 183.6 M60.6 190.6 L71 190.6 M60.6 192.8 L75 192.8 M60.6 200.2 L75 200.2 M60.6 202.4 L66.4 202.4"/>
</g>
<g>
<rect x="83.8" y="178" width="12.4" height="1.7" rx=".8" fill="#3c4650"/><rect x="89.6" y="177.6" width="6.6" height="2.8" rx="1.3" fill="#1eb3f2"/>
<rect x="83.8" y="183.2" width="12.4" height="1.7" rx=".8" fill="#3c4650"/><rect x="89.6" y="182.8" width="6.6" height="2.8" rx="1.3" fill="#1eb3f2"/>
<rect x="83.8" y="188.4" width="12.4" height="1.7" rx=".8" fill="#3c4650"/><rect x="83.2" y="188" width="6.6" height="2.8" rx="1.3" fill="#62cf24"/>
<circle cx="89.8" cy="201.4" r="6.6" fill="#c5c9ce"/>
<circle cx="89.8" cy="201" r="5.3" fill="url(#kn1)"/>
</g>
</g>
<!-- File Station -->
<g>
<rect x="52.4" y="309.4" width="47.2" height="1.6" fill="rgba(10,30,70,.38)"/>
<path d="M53 273.6 Q53 272 54.6 272 L70.6 272 Q71.8 272 72.4 273 L74.4 276 L98 276 Q99.4 276 99.4 277.4 L99.4 300 L53 300Z" fill="#e9a52c"/>
<rect x="55.4" y="277" width="41.6" height="1.4" fill="#f8f8f8"/><rect x="55" y="278.4" width="42.4" height="1.3" fill="#c9ccd1"/><rect x="54.6" y="279.7" width="43.2" height="1.5" fill="#f2f2f2"/>
<path d="M52 282.6 Q52 281 53.6 281 L98.4 281 Q100 281 100 282.6 L100 308 Q100 309.6 98.4 309.6 L53.6 309.6 Q52 309.6 52 308Z" fill="url(#fs1)"/>
<path d="M89.6 301.6 L97.6 309.8" stroke="#1f5f96" stroke-width="3" stroke-linecap="round"/>
<circle cx="83.4" cy="295.6" r="8.4" fill="url(#mg1)" stroke="#fdfdfb" stroke-width="2"/>
</g>
<!-- DSM Help -->
<g>
<circle cx="76" cy="390.6" r="21.8" fill="rgba(10,30,70,.25)"/>
<circle cx="76" cy="390" r="20.8" fill="url(#hp1)" stroke="#e2e5e8" stroke-width="2.6"/>
<path d="M69.4 385.6 C69.4 381 72.2 378.6 76.2 378.6 C80.4 378.6 83 381 83 384.4 C83 387 81.6 388.4 79.8 389.8 C78.2 391 77.8 391.8 77.8 394 L74.2 394 C74.2 391 75 389.6 76.8 388.2 C78.4 387 79.2 386.2 79.2 384.6 C79.2 383 78 381.8 76.2 381.8 C74.2 381.8 73 383 73 385.6Z M74 396.6 L78 396.6 L78 400.8 L74 400.8Z" fill="#fbfdf6"/>
</g>
</svg>

<span class="t dl" style="left:51.98px;top:116.57px;font-size:12.50px;color:#ffffff;transform:scaleX(1.0196);transform-origin:50% 0;">Package</span>
<span class="t dl" style="left:57.94px;top:132.77px;font-size:12.50px;color:#ffffff;transform:scaleX(1.0875);transform-origin:50% 0;">Center</span>
<span class="t dl" style="left:38.43px;top:216.97px;font-size:12.50px;color:#ffffff;transform:scaleX(1.0589);transform-origin:50% 0;">Control Panel</span>
<span class="t dl" style="left:44.93px;top:316.97px;font-size:12.50px;color:#ffffff;transform:scaleX(1.0811);transform-origin:50% 0;">File Station</span>
<span class="t dl" style="left:48.22px;top:416.97px;font-size:12.50px;color:#ffffff;transform:scaleX(1.0288);transform-origin:50% 0;">DSM Help</span>
<div class="abs" id="win" style="left:148px;top:56px;width:1024px;height:688px;background:#fff;box-shadow:0 -2px 1px 0 rgba(22,62,128,.62),0 2.5px 4px 0 rgba(8,24,66,.62),0 0 6px 1px rgba(14,44,104,.34);"></div>
<div class="abs" style="left:148px;top:56px;width:1024px;height:33px;background:linear-gradient(#e2e7ef,#eef1f6 40%,#ffffff);"></div>
<span class="t" style="left:596.00px;top:62.36px;font-size:13.40px;color:#20508a;font-weight:bold;transform:scaleX(1.1219);transform-origin:0 0;">Resource Monitor</span>
<div class="abs" style="left:160px;top:93px;width:212px;height:50px;border-radius:3px;background:#2a568c;"></div>
<div class="abs" style="left:385px;top:89px;width:2px;height:655px;background:linear-gradient(90deg,rgba(0,0,0,0),rgba(120,130,150,.12));"></div>
<div class="abs" style="left:387px;top:89px;width:1px;height:655px;background:#dfe2e8;"></div>
<svg style="left:148px;top:56px" width="1024" height="300" viewBox="148 56 1024 300">
<defs><linearGradient id="rmg2" x1="0" y1="0" x2="0" y2="1"><stop offset="0" stop-color="#1468c9"/><stop offset="1" stop-color="#0a3c98"/></linearGradient></defs>
<!-- title icon -->
<rect x="160.3" y="61.2" width="23.5" height="20.6" fill="#fbfbfc"/>
<rect x="160.3" y="61.2" width="23.5" height="0.9" fill="#b9b5b6"/>
<rect x="160.3" y="80.8" width="23.5" height="1" fill="#aaa7a8"/>
<rect x="161" y="64" width="22" height="16" fill="url(#rmg2)"/>
<rect x="161" y="64" width="1.8" height="16" fill="#071f5c" opacity=".6"/>
<path d="M163.4 69.8 L166.6 71.4 L169.6 67.2 L171.8 69.4 L176.4 66 L180.4 70.6 L183 67.2" stroke="#dfeaf8" stroke-width="1" fill="none"/>
<path d="M163.4 74.6 L165 74 L168.6 77.8 L172.8 71.8 L176.6 71 L179.4 76.2 L183 76.2" stroke="#dfeaf8" stroke-width="1" fill="none"/>
<!-- window controls -->
<g fill="none" stroke="#a6abb2">
<path d="M1047.4 68 L1054.6 68 Q1057 68 1057 70 Q1057 72.2 1054.6 72.2 L1051 72.2" stroke-width="1.9"/>
<path d="M1050 74.6 L1052 74.6 L1052 76.6 L1050 76.6Z" fill="#a6abb2" stroke="none"/>
<path d="M1078 71.8 L1090.2 71.8" stroke-width="2.2"/>
<rect x="1110.7" y="68.2" width="10.6" height="7.8" stroke-width="1.7"/><rect x="1110" y="67" width="12" height="3" fill="#a6abb2" stroke="none"/>
<path d="M1142.6 67.4 L1153.6 76.6 M1153.6 67.4 L1142.6 76.6" stroke-width="1.9"/>
</g>
<!-- sidebar icons -->
<g fill="none" stroke="#ffffff" stroke-width="2">
<rect x="170" y="108" width="20" height="16" rx="2"/>
<path d="M169 128 L191 128" stroke-width="2"/>
<path d="M171 118.9 L173 119 L175.8 114.8 L178.7 120.2 L183.1 111.6 L186.9 118.8 L189 118.6" stroke-width="1.8" stroke-linejoin="round"/>
</g>
<g fill="#65727f" stroke="#5f6b78">
<path d="M173 160.9 L173 171.9 M186.9 163.7 L186.9 174.8 M173 171.9 L186.9 163.7" stroke-width="1.9" fill="none"/>
<circle cx="173" cy="160.9" r="2.9" stroke="none"/><circle cx="173" cy="171.9" r="2.9" stroke="none"/><circle cx="186.9" cy="163.7" r="2.9" stroke="none"/><circle cx="186.9" cy="174.8" r="2.9" stroke="none"/>
</g>
<!-- plug -->
<g transform="translate(182.2,215.6) rotate(45)" fill="#67737f" stroke="none">
<path d="M-9.4 0 L9.4 0 L9.4 1.3 L8.4 1.3 A8.4 9.4 0 0 1 -8.4 1.3 L-9.4 1.3Z"/>
<rect x="-5.4" y="-7.3" width="2" height="7.6" rx=".8"/><rect x="2.6" y="-7.5" width="2" height="7.8" rx=".8"/>
<rect x="-1.2" y="8.6" width="3" height="9.4" rx="1.5"/>
</g>
<!-- speed -->
<g transform="translate(179.95,267.8)">
<circle r="11.1" fill="#67737f"/>
<path d="M-7.7 1.3 A7.9 7.9 0 1 1 7.7 1.3 Q0 7.4 -7.7 1.3Z" fill="#ffffff"/>
<g stroke="#67737f" stroke-width="1.8"><path d="M-8.6 -0.4 L-5.2 -0.4"/><path d="M-6.1 -6.1 L-3.9 -3.9"/><path d="M0 -8.6 L0 -5.2"/><path d="M6.1 -6.1 L4.3 -4.3"/><path d="M8.6 -0.4 L5.2 -0.4"/></g>
<path d="M-0.2 2.9 L5.6 -2" stroke="#67737f" stroke-width="1.9" stroke-linecap="round"/>
<circle cx="-0.2" cy="2.9" r="2.3" fill="#67737f"/>
</g>
<!-- gear -->
<g transform="translate(179.9,317.8)" fill="#65717e">
<circle r="9.3"/>
<g><rect x="-2.7" y="-11.1" width="5.4" height="22.2" rx="1"/><rect x="-2.7" y="-11.1" width="5.4" height="22.2" rx="1" transform="rotate(45)"/><rect x="-2.7" y="-11.1" width="5.4" height="22.2" rx="1" transform="rotate(90)"/><rect x="-2.7" y="-11.1" width="5.4" height="22.2" rx="1" transform="rotate(135)"/></g>
<circle r="5.2" fill="#ffffff"/><circle r="2.7"/>
</g>
</svg>

<span class="t" style="left:198.30px;top:107.84px;font-size:14.60px;color:#ffffff;transform:scaleX(1.0601);transform-origin:0 0;text-shadow:0 0 .3px rgba(255,255,255,.6);">Performance</span>
<span class="t" style="left:198.30px;top:157.64px;font-size:14.60px;color:#535d68;transform:scaleX(1.0491);transform-origin:0 0;">Task Manager</span>
<span class="t" style="left:198.00px;top:207.64px;font-size:14.60px;color:#535d68;transform:scaleX(1.0461);transform-origin:0 0;">Connected Users</span>
<span class="t" style="left:197.70px;top:257.64px;font-size:14.60px;color:#535d68;transform:scaleX(1.0739);transform-origin:0 0;">Speed Limit</span>
<span class="t" style="left:197.70px;top:307.64px;font-size:14.60px;color:#535d68;transform:scaleX(1.0805);transform-origin:0 0;">Settings</span>
<div class="abs" style="left:403.5px;top:89px;width:1px;height:24px;background:#d5dbe4;"></div>
<div class="abs" style="left:492.5px;top:89px;width:1px;height:24px;background:#d5dbe4;"></div>
<div class="abs" style="left:553.0px;top:89px;width:1px;height:24px;background:#d5dbe4;"></div>
<div class="abs" style="left:635.0px;top:89px;width:1px;height:24px;background:#d5dbe4;"></div>
<div class="abs" style="left:718.0px;top:89px;width:1px;height:24px;background:#d5dbe4;"></div>
<div class="abs" style="left:776.5px;top:89px;width:1px;height:24px;background:#d5dbe4;"></div>
<div class="abs" style="left:854.0px;top:89px;width:1px;height:24px;background:#d5dbe4;"></div>
<div class="abs" style="left:921.0px;top:89px;width:1px;height:24px;background:#d5dbe4;"></div>
<div class="abs" style="left:404px;top:119px;width:756px;height:1px;background:#d3d6db;"></div>
<div class="abs" style="left:404px;top:120px;width:756px;height:2px;background:linear-gradient(rgba(200,204,210,.45),rgba(255,255,255,0));"></div>
<svg style="left:514px;top:111px" width="20" height="10" viewBox="0 0 20 10"><path d="M2.3 9 L9 2.4 L15.7 9 Z" fill="#fff"/><path d="M2.3 8.6 L9 2 L15.7 8.6" fill="none" stroke="#d0d3d8" stroke-width="1"/></svg>
<span class="t" style="left:421.00px;top:90.67px;font-size:12.50px;color:#535d68;transform:scaleX(1.0788);transform-origin:0 0;">Overview</span>
<span class="t" style="left:510.20px;top:90.67px;font-size:12.50px;color:#23508c;font-weight:bold;transform:scaleX(1.0306);transform-origin:0 0;">CPU</span>
<span class="t" style="left:570.30px;top:90.67px;font-size:12.50px;color:#535d68;transform:scaleX(1.0810);transform-origin:0 0;">Memory</span>
<span class="t" style="left:652.00px;top:90.67px;font-size:12.50px;color:#535d68;transform:scaleX(1.0907);transform-origin:0 0;">Network</span>
<span class="t" style="left:735.20px;top:90.67px;font-size:12.50px;color:#535d68;transform:scaleX(1.0615);transform-origin:0 0;">Disk</span>
<span class="t" style="left:793.60px;top:90.67px;font-size:12.50px;color:#535d68;transform:scaleX(1.0793);transform-origin:0 0;">Volume</span>
<span class="t" style="left:871.50px;top:90.67px;font-size:12.50px;color:#535d68;transform:scaleX(1.0265);transform-origin:0 0;">iSCSI</span>
<span class="t" style="left:430.60px;top:163.03px;font-size:12.60px;color:#4a5563;font-weight:bold;transform:scaleX(1.2150);transform-origin:0 0;">Utilization (%)</span>
<div class="abs" style="left:429px;top:182px;width:728px;height:427px;background:#f5fafe;border:1px solid #abb3c0;box-sizing:content-box;"></div>
<div class="abs" style="left:430px;top:267.5px;width:728px;height:1px;background:#dbe1eb;"></div>
<div class="abs" style="left:430px;top:353.0px;width:728px;height:1px;background:#dbe1eb;"></div>
<div class="abs" style="left:430px;top:438.5px;width:728px;height:1px;background:#dbe1eb;"></div>
<div class="abs" style="left:430px;top:524.0px;width:728px;height:1px;background:#dbe1eb;"></div>
<span class="t" style="left:410.32px;top:173.53px;font-size:10.00px;color:#4e5661;">100</span>
<span class="t" style="left:415.88px;top:258.94px;font-size:10.00px;color:#4e5661;">80</span>
<span class="t" style="left:415.88px;top:344.44px;font-size:10.00px;color:#4e5661;">60</span>
<span class="t" style="left:415.88px;top:429.94px;font-size:10.00px;color:#4e5661;">40</span>
<span class="t" style="left:415.88px;top:515.43px;font-size:10.00px;color:#4e5661;">20</span>
<span class="t" style="left:421.44px;top:600.53px;font-size:10.00px;color:#4e5661;">0</span>
<svg style="left:430px;top:183px" width="729" height="427" viewBox="430 183 729 427">
<path d="M1001.05 610.00 L1001.05 601.40 L1004.30 597.30 L1007.20 601.60 L1010.60 601.60 L1013.40 598.20 L1014.30 591.90 L1016.00 568.30 L1017.35 559.80 L1019.30 567.50 L1024.10 589.10 L1027.50 589.10 L1031.10 597.80 L1034.10 601.60 L1037.00 597.30 L1040.70 597.30 L1044.40 601.60 L1046.60 601.60 L1051.10 597.30 L1055.10 601.60 L1057.30 601.60 L1060.70 597.30 L1064.00 601.60 L1070.20 601.60 L1073.60 597.30 L1077.30 601.60 L1080.60 601.60 L1083.90 597.30 L1094.80 597.30 L1097.50 601.60 L1100.90 597.30 L1111.10 597.30 L1114.50 601.60 L1117.90 597.30 L1122.70 601.60 L1125.00 601.60 L1128.10 597.30 L1131.50 601.60 L1134.90 597.30 L1137.60 597.30 L1141.70 601.60 L1145.10 601.60 L1147.80 597.30 L1158.50 597.30 L1158.50 610.00 Z" fill="#3b82cc"/>
<path d="M1013.60 610.00 L1013.60 603.00 L1015.30 579.30 L1017.35 563.90 L1020.10 579.30 L1024.10 591.90 L1027.50 591.90 L1031.10 605.30 L1031.10 610.00 Z" fill="#4fa9ea"/>
<path d="M1001.05 610.00 L1001.05 605.30 L1010.60 605.30 L1013.80 599.30 L1016.80 584.10 L1018.00 584.10 L1020.40 596.30 L1024.50 601.10 L1027.50 601.10 L1031.10 605.30 L1158.50 605.30 L1158.50 610.00 Z" fill="#a9dc35"/>
</svg>

<span class="t" style="left:431.20px;top:631.94px;font-size:14.60px;color:#4a5563;font-weight:bold;transform:scaleX(1.1498);transform-origin:0 0;">Utilization</span>
<span class="t" style="left:649.00px;top:632.56px;font-size:18.60px;color:#4a5563;font-weight:bold;transform:scaleX(1.2374);transform-origin:0 0;">1</span>
<span class="t" style="left:669.30px;top:633.94px;font-size:14.60px;color:#4a5563;font-weight:bold;transform:scaleX(1.3095);transform-origin:0 0;">%</span>
<div class="abs" style="left:429px;top:655px;width:260px;height:3px;background:#b3bcc8;"></div>
<div class="abs" style="left:900px;top:655px;width:260px;height:3px;background:#b3bcc8;"></div>
<span class="t" style="left:902.40px;top:631.84px;font-size:14.60px;color:#4a5563;font-weight:bold;transform:scaleX(1.1166);transform-origin:0 0;">Load Average</span>
<div class="abs" style="left:431px;top:666px;width:6px;height:40px;background:#aadd33;"></div>
<div class="abs" style="left:517px;top:666px;width:6px;height:40px;background:#55aaee;"></div>
<div class="abs" style="left:603px;top:666px;width:6px;height:40px;background:#3a7fcb;"></div>
<div class="abs" style="left:902px;top:666px;width:6px;height:40px;background:#b3bcc8;"></div>
<div class="abs" style="left:988px;top:666px;width:6px;height:40px;background:#b3bcc8;"></div>
<div class="abs" style="left:1074px;top:666px;width:6px;height:40px;background:#b3bcc8;"></div>
<span class="t" style="left:443.40px;top:663.97px;font-size:12.50px;color:#535d68;transform:scaleX(1.0079);transform-origin:0 0;">User</span>
<span class="t" style="left:529.20px;top:663.97px;font-size:12.50px;color:#535d68;transform:scaleX(1.0654);transform-origin:0 0;">System</span>
<span class="t" style="left:615.30px;top:663.97px;font-size:12.50px;color:#535d68;transform:scaleX(1.1326);transform-origin:0 0;">I/O Wait</span>
<span class="t" style="left:443.00px;top:685.16px;font-size:18.60px;color:#4a5563;font-weight:bold;transform:scaleX(1.2374);transform-origin:0 0;">1</span>
<span class="t" style="left:464.20px;top:686.61px;font-size:14.40px;color:#4a5563;transform:scaleX(1.1715);transform-origin:0 0;">%</span>
<span class="t" style="left:529.00px;top:685.16px;font-size:18.60px;color:#4a5563;font-weight:bold;transform:scaleX(1.2374);transform-origin:0 0;">0</span>
<span class="t" style="left:550.20px;top:686.61px;font-size:14.40px;color:#4a5563;transform:scaleX(1.1715);transform-origin:0 0;">%</span>
<span class="t" style="left:615.00px;top:685.16px;font-size:18.60px;color:#4a5563;font-weight:bold;transform:scaleX(1.2374);transform-origin:0 0;">2</span>
<span class="t" style="left:636.20px;top:686.61px;font-size:14.40px;color:#4a5563;transform:scaleX(1.1715);transform-origin:0 0;">%</span>
<span class="t" style="left:914.60px;top:664.07px;font-size:12.50px;color:#535d68;transform:scaleX(1.0927);transform-origin:0 0;">1 min</span>
<span class="t" style="left:1000.40px;top:664.07px;font-size:12.50px;color:#535d68;transform:scaleX(1.0973);transform-origin:0 0;">5 mins</span>
<span class="t" style="left:1086.40px;top:664.07px;font-size:12.50px;color:#535d68;transform:scaleX(1.0967);transform-origin:0 0;">15 mins</span>
<span class="t" style="left:914.20px;top:684.56px;font-size:18.60px;color:#4a5563;font-weight:bold;transform:scaleX(1.2376);transform-origin:0 0;">0.1</span>
<span class="t" style="left:1000.20px;top:684.56px;font-size:18.60px;color:#4a5563;font-weight:bold;transform:scaleX(1.2375);transform-origin:0 0;">0.15</span>
<span class="t" style="left:1086.20px;top:684.56px;font-size:18.60px;color:#4a5563;font-weight:bold;transform:scaleX(1.2375);transform-origin:0 0;">0.15</span>
</body></html>
